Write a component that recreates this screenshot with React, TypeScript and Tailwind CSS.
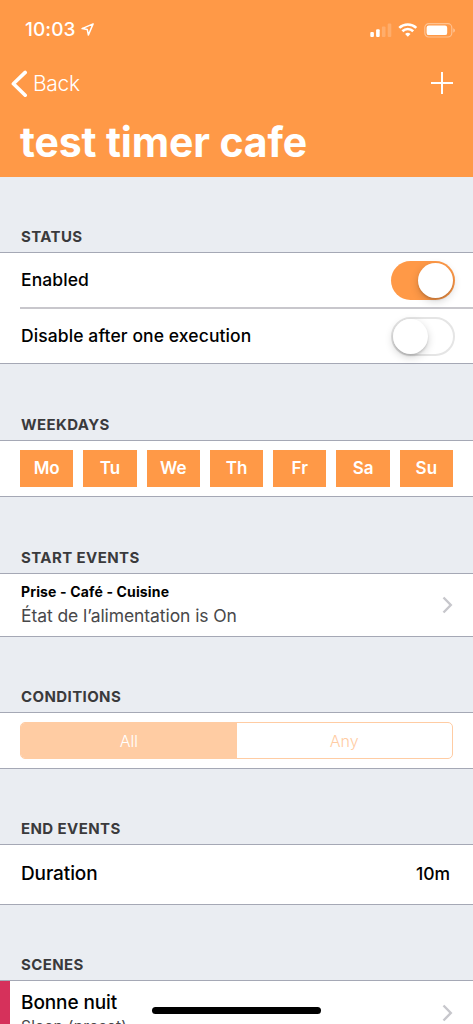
import type { ReactNode } from "react";
import clsx from "clsx";

const weekdays = ["Mo", "Tu", "We", "Th", "Fr", "Sa", "Su"];

function StatusBar() {
    return (
        <div className="flex h-[58px] items-center justify-between pl-[25px] pr-[17px] pt-px">
            <div className="flex items-center gap-[5px]">
                <span className="text-[19px] font-medium leading-6 tracking-[0.1px]">10:03</span>
                <svg width="13" height="13" viewBox="0 0 13 13" fill="none">
                    <path d="M12.1.9 1.1 5.6l5.2 1 1.1 5.4L12.1.9Z" stroke="white" strokeWidth="1.5" strokeLinejoin="round" />
                </svg>
            </div>
            <div className="flex items-center pt-px">
                <svg width="22" height="14" viewBox="0 0 22 14" fill="white">
                    <rect x="0.3" y="9" width="3.6" height="5" rx="1" />
                    <rect x="6.1" y="6.3" width="3.6" height="7.7" rx="1" />
                    <rect x="11.9" y="3.5" width="3.6" height="10.5" rx="1" opacity="0.2" />
                    <rect x="17.7" y="0.5" width="3.6" height="13.5" rx="1" opacity="0.2" />
                </svg>
                <svg className="ml-1.5" width="20" height="14" viewBox="0 0 20 14" fill="none" stroke="white" strokeWidth="2.6">
                    <path d="M1.3 4.9a12.3 12.3 0 0 1 17 0" />
                    <path d="M4.4 8.2a7.8 7.8 0 0 1 10.8 0" />
                    <path d="M9.8 13.8 7.1 11a3.9 3.9 0 0 1 5.4 0Z" fill="white" stroke="none" />
                </svg>
                <svg className="ml-1.5" width="32" height="15" viewBox="0 0 32 15">
                    <rect x="0.8" y="0.7" width="27" height="13.3" rx="4" fill="none" stroke="white" strokeOpacity="0.4" strokeWidth="1.2" />
                    <rect x="2.6" y="2.6" width="20.6" height="9.5" rx="2.2" fill="white" />
                    <path d="M29.3 5.2c2.1.8 2.1 3.6 0 4.4Z" fill="white" fillOpacity="0.45" />
                </svg>
            </div>
        </div>
    );
}

function Header() {
    return (
        <header className="h-[177px] bg-[#ff9947] text-white">
            <StatusBar />
            <div className="flex h-[52px] items-center justify-between pl-[11px] pr-5">
                <button className="flex items-center gap-[5px]">
                    <svg width="17" height="28" viewBox="0 0 17 28" fill="none" stroke="white" strokeWidth="3.6" strokeLinecap="round" strokeLinejoin="round">
                        <path d="M14.2 2.4 2.4 13.8l11.8 11.4" />
                    </svg>
                    <span className="text-[21px] font-light leading-7 tracking-[-0.3px]">Back</span>
                </button>
                <svg className="mb-0.5" width="22" height="22" viewBox="0 0 22 22" stroke="white" strokeWidth="2">
                    <path d="M11 0v22M0 11h22" />
                </svg>
            </div>
            <h1 className="pl-5 pt-[7px] text-[41px] font-bold leading-[50px] tracking-[-0.15px]">test timer cafe</h1>
        </header>
    );
}

function Section({
    title,
    tall,
    className,
    children,
}: {
    title: string;
    tall?: boolean;
    className: string;
    children: ReactNode;
}) {
    return (
        <section>
            <h2
                className={clsx(
                    "flex items-end pb-[5px] pl-[21px] text-[15px] font-bold leading-5 tracking-[0.4px] text-[#3a3a3c]",
                    tall ? "h-[76px]" : "h-[75px]"
                )}
            >
                {title}
            </h2>
            <div className={clsx("border-y border-[#a5a8b5] bg-white", className)}>{children}</div>
        </section>
    );
}

function Switch({ on }: { on?: boolean }) {
    return (
        <span
            className={clsx(
                "flex h-[39px] w-16 items-center rounded-full",
                on ? "justify-end bg-[#ff9947] pr-0.5" : "border-2 border-[#e5e5e5] bg-white"
            )}
        >
            <span className="size-[35px] rounded-full bg-white shadow-[0_3px_8px_rgba(0,0,0,0.18),0_2px_2px_rgba(0,0,0,0.12)]" />
        </span>
    );
}

function Chevron() {
    return (
        <svg width="11" height="18" viewBox="0 0 11 18" fill="none" stroke="#c7c7cc" strokeWidth="2.4">
            <path d="m1.5 1.5 7.3 7.5-7.3 7.5" />
        </svg>
    );
}

export default function App() {
    return (
        <div className="relative h-[1024px] w-[473px] overflow-hidden bg-[#eaedf2] font-['Inter',sans-serif] text-black">
            <Header />

            <Section title="STATUS" className="h-[112px]">
                <div className="flex h-[54px] items-center justify-between pl-[21px] pr-[18px]">
                    <span className="pt-px text-[17.5px] font-medium tracking-[0.1px]">Enabled</span>
                    <Switch on />
                </div>
                <div className="ml-5 flex h-[56px] items-center justify-between border-t-2 border-[#c8c7cc] pl-px pr-[18px]">
                    <span className="text-[17.5px] font-medium tracking-[0.1px]">Disable after one execution</span>
                    <Switch />
                </div>
            </Section>

            <Section title="WEEKDAYS" tall className="flex h-[57px] items-center gap-2.5 pl-5 pr-[20px]">
                {weekdays.map((day) => (
                    <div
                        key={day}
                        className="flex h-[37px] flex-1 items-center justify-center bg-[#ff9947] text-[17px] font-semibold text-white"
                    >
                        {day}
                    </div>
                ))}
            </Section>

            <Section title="START EVENTS" tall className="flex h-[64px] items-center justify-between pl-[21px] pr-[20px]">
                <div className="pb-[3px]">
                    <p className="text-[14px] font-bold leading-6 tracking-[0.15px]">Prise - Café - Cuisine</p>
                    <p className="text-[17.5px] leading-6 tracking-[-0.08px] text-[#48484a]">État de l’alimentation is On</p>
                </div>
                <Chevron />
            </Section>

            <Section title="CONDITIONS" className="flex h-[57px] items-center px-5">
                <div className="flex h-[37px] w-full overflow-hidden rounded-[5px] border-[1.5px] border-[#ffcca3] text-[16px] font-light">
                    <div className="flex flex-1 items-center justify-center bg-[#ffcca3] text-white">All</div>
                    <div className="flex flex-1 items-center justify-center text-[#ffcca3]">Any</div>
                </div>
            </Section>

            <Section title="END EVENTS" className="flex h-[61px] items-center justify-between pl-[21px] pr-[23px]">
                <span className="text-[19px] font-medium tracking-[-0.1px]">Duration</span>
                <span className="text-[17.5px] font-medium">10m</span>
            </Section>

            <Section title="SCENES" className="flex h-[66px] justify-between pr-[20px]">
                <div className="flex">
                    <div className="w-2.5 bg-[#d6315b]" />
                    <div className="pl-[11px] pt-[9px]">
                        <p className="pt-px text-[19px] font-medium leading-6 tracking-[-0.1px]">Bonne nuit</p>
                        <p className="text-[15.5px] leading-[23px] tracking-[0.2px] text-[#48484a]">Sleep (preset)</p>
                    </div>
                </div>
                <div className="pt-[23px]">
                    <Chevron />
                </div>
            </Section>

            {/* home indicator */}
            <div className="absolute bottom-[10px] left-[152px] h-[7px] w-[169px] rounded-full bg-black" />
        </div>
    );
}
